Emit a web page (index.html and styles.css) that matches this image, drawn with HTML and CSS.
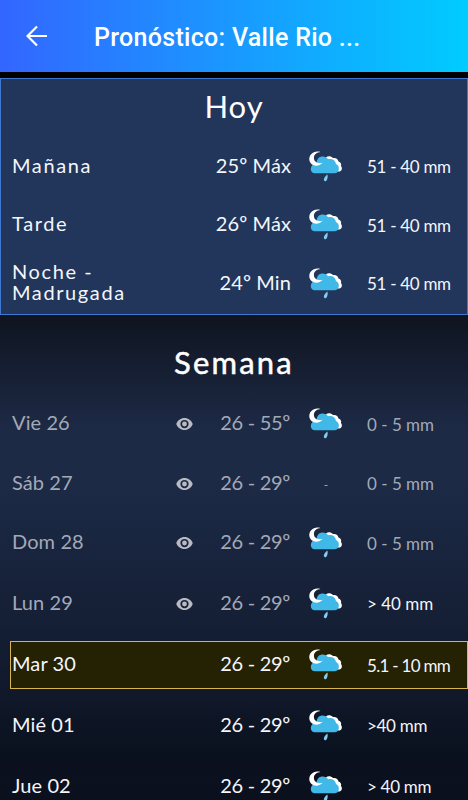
FILE: index.html
```
<!DOCTYPE html>
<html lang="es">
<head>
    <meta charset="UTF-8">
    <meta name="viewport" content="width=device-width, initial-scale=1.0">
    <title>Pronóstico</title>
    <link rel="stylesheet" href="styles.css">
</head>
<body>

    <!-- Shared icons -->
    <svg class="sprite" aria-hidden="true">
        <symbol id="eye" viewBox="0 0 24 24">
            <path d="M12 4C7 4 2.7 7.2 1 12c1.7 4.8 6 8 11 8s9.300-3.200 11-8c-1.700-4.800-6-8-11-8zm0 13.500a5.500 5.500 0 1 1 0-11 5.500 5.500 0 0 1 0 11zm0-8.700a3.200 3.200 0 1 0 0 6.400 3.200 3.200 0 0 0 0-6.400z"/>
        </symbol>
        <symbol id="rain" viewBox="0 0 34 31">
            <path fill="#fff" d="M16 9c0-4 5-5 8-2 3-.5 5 1 5.500 3.500 2.500 1 3 2.500 2.500 4.500 2 2.500.5 6-3 5.500L17 14z"/>
            <path fill="#40b8e8" d="M6 22.300c-5 0-5.500-6.500-1.500-9.300l3-1C8 7.500 10.500 5.500 13.500 5.500c2.500 0 4.500 1 5.500 2.800 4-1 7.500 1 8 4.700 4.500 2 3.500 9.300-1.500 9.300z"/>
            <path fill="#fff" d="M11.500.9C4-1.200-.5 4.500.4 9.300c1.100 5.400 8.100 7.700 13.400 2.500C9 13 4.900 10.700 4.900 6.900 4.900 3.400 8 1 11.500.9z"/>
            <path fill="#85cdf0" d="M18.400 23.500c.8 3.200-.4 6.800-2.400 6.800-2.400-.8-.8-4.500 2.400-6.800z"/>
        </symbol>
    </svg>

    <header class="app-bar">
        <svg class="back" viewBox="0 0 22 22"><path d="M21 11H2M11 1.500L1.500 11 11 20.500"/></svg>
        <h1>Pronóstico: Valle Rio ...</h1>
    </header>

    <section class="today">
        <h2>Hoy</h2>
        <div class="row">
            <span class="day">Mañana</span>
            <span class="temp">25º Máx</span>
            <svg class="weather"><use href="#rain"/></svg>
            <span class="mm">51 - 40 mm</span>
        </div>
        <div class="row">
            <span class="day">Tarde</span>
            <span class="temp">26º Máx</span>
            <svg class="weather"><use href="#rain"/></svg>
            <span class="mm">51 - 40 mm</span>
        </div>
        <div class="row">
            <span class="day">Noche -<br>Madrugada</span>
            <span class="temp">24º Min</span>
            <svg class="weather"><use href="#rain"/></svg>
            <span class="mm">51 - 40 mm</span>
        </div>
    </section>

    <section class="week">
        <h2>Semana</h2>
        <div class="row past">
            <span class="day">Vie 26</span>
            <span class="temp"><svg class="eye"><use href="#eye"/></svg><span class="range">26 - 55º</span></span>
            <svg class="weather"><use href="#rain"/></svg>
            <span class="mm">0 - 5 mm</span>
        </div>
        <div class="row past">
            <span class="day">Sáb 27</span>
            <span class="temp"><svg class="eye"><use href="#eye"/></svg><span class="range">26 - 29º</span></span>
            <span class="none">-</span>
            <span class="mm">0 - 5 mm</span>
        </div>
        <div class="row past">
            <span class="day">Dom 28</span>
            <span class="temp"><svg class="eye"><use href="#eye"/></svg><span class="range">26 - 29º</span></span>
            <svg class="weather"><use href="#rain"/></svg>
            <span class="mm">0 - 5 mm</span>
        </div>
        <div class="row past last">
            <span class="day">Lun 29</span>
            <span class="temp"><svg class="eye"><use href="#eye"/></svg><span class="range">26 - 29º</span></span>
            <svg class="weather"><use href="#rain"/></svg>
            <span class="mm heavy">&gt; 40 mm</span>
        </div>
        <div class="row current">
            <span class="day">Mar 30</span>
            <span class="temp"><span class="range">26 - 29º</span></span>
            <svg class="weather"><use href="#rain"/></svg>
            <span class="mm decimal">5.1 - 10 mm</span>
        </div>
        <div class="row">
            <span class="day">Mié 01</span>
            <span class="temp"><span class="range">26 - 29º</span></span>
            <svg class="weather"><use href="#rain"/></svg>
            <span class="mm heavy">&gt;40 mm</span>
        </div>
        <div class="row">
            <span class="day">Jue 02</span>
            <span class="temp"><span class="range">26 - 29º</span></span>
            <svg class="weather"><use href="#rain"/></svg>
            <span class="mm heavy">&gt; 40 mm</span>
        </div>
    </section>

</body>
</html>
```
FILE: styles.css
```
* {
    margin: 0;
    padding: 0;
    box-sizing: border-box;
}

body {
    height: 800px;
    overflow: hidden;
    background: #000;
    color: #f4f6fb;
    font-family: Lato, "Open Sans", sans-serif;
}

.sprite {
    display: none;
}

.app-bar {
    display: flex;
    align-items: center;
    height: 72px;
    padding-left: 26px;
    background: linear-gradient(90deg, #3366ff, #00ccff);
}

.back {
    width: 22px;
    height: 22px;
    fill: none;
    stroke: #fff;
    stroke-width: 2.2;
}

.app-bar h1 {
    margin-left: 46px;
    padding-top: 2px;
    font-family: Roboto, sans-serif;
    font-size: 25px;
    font-weight: 500;
    letter-spacing: 0.3px;
    color: #fff;
    white-space: nowrap;
}

h2 {
    text-align: center;
    font-size: 31px;
    font-weight: 400;
    color: #fff;
    line-height: 36px;
}

.today {
    height: 237px;
    margin-top: 6px;
    border: 1px solid #3f78d0;
    background: #22365c;
}

.today h2 {
    height: 58px;
    padding-top: 9px;
    letter-spacing: 1px;
}

.row {
    display: grid;
    grid-template-columns: 138px 141px 18px 34px 24px 1fr;
    align-items: center;
    height: 61px;
    padding-left: 12px;
}

.today .row {
    height: 58.6px;
    padding-left: 11px;
}

.day,
.temp {
    padding-bottom: 2px;
    font-size: 20px;
    line-height: 21px;
    letter-spacing: 0.1px;
    white-space: nowrap;
}

.today .day {
    letter-spacing: 1.6px;
}

.temp {
    display: flex;
    justify-content: flex-end;
    align-items: center;
}

.range {
    margin-right: 1px;
    letter-spacing: -0.3px;
}

.weather,
.none {
    grid-column: 4;
    width: 34px;
    height: 31px;
}

.none {
    font-size: 12px;
    line-height: 33px;
    text-align: center;
}

.mm {
    grid-column: 6;
    padding-top: 1px;
    font-size: 17px;
    letter-spacing: -0.3px;
    white-space: nowrap;
}

.decimal {
    letter-spacing: -0.7px;
}

.week {
    height: 485px;
    background: linear-gradient(#0e141f, #141c2d 40px, #1d2a46 115px, #1c2a46 170px, #17223a 270px, #10182a 380px, #0a111e 440px, #0b101d);
}

.week h2 {
    height: 79px;
    padding-top: 29px;
    letter-spacing: 2.2px;
    -webkit-text-stroke: 0.5px #fff;
}

.past {
    height: 59.5px;
    color: #a3a9b7;
}

.past .mm {
    letter-spacing: 0;
}

.past.last {
    height: 61px;
}

.past .heavy {
    color: #f4f6fb;
}

.eye {
    width: 19px;
    height: 18px;
    margin: 3px 26px 0 0;
    fill: #b9bbc3;
}

.current {
    height: 48px;
    margin: 7px 0 6px 10px;
    padding-left: 1px;
    border: 1px solid #d9b64d;
    background: #242203;
}
```
